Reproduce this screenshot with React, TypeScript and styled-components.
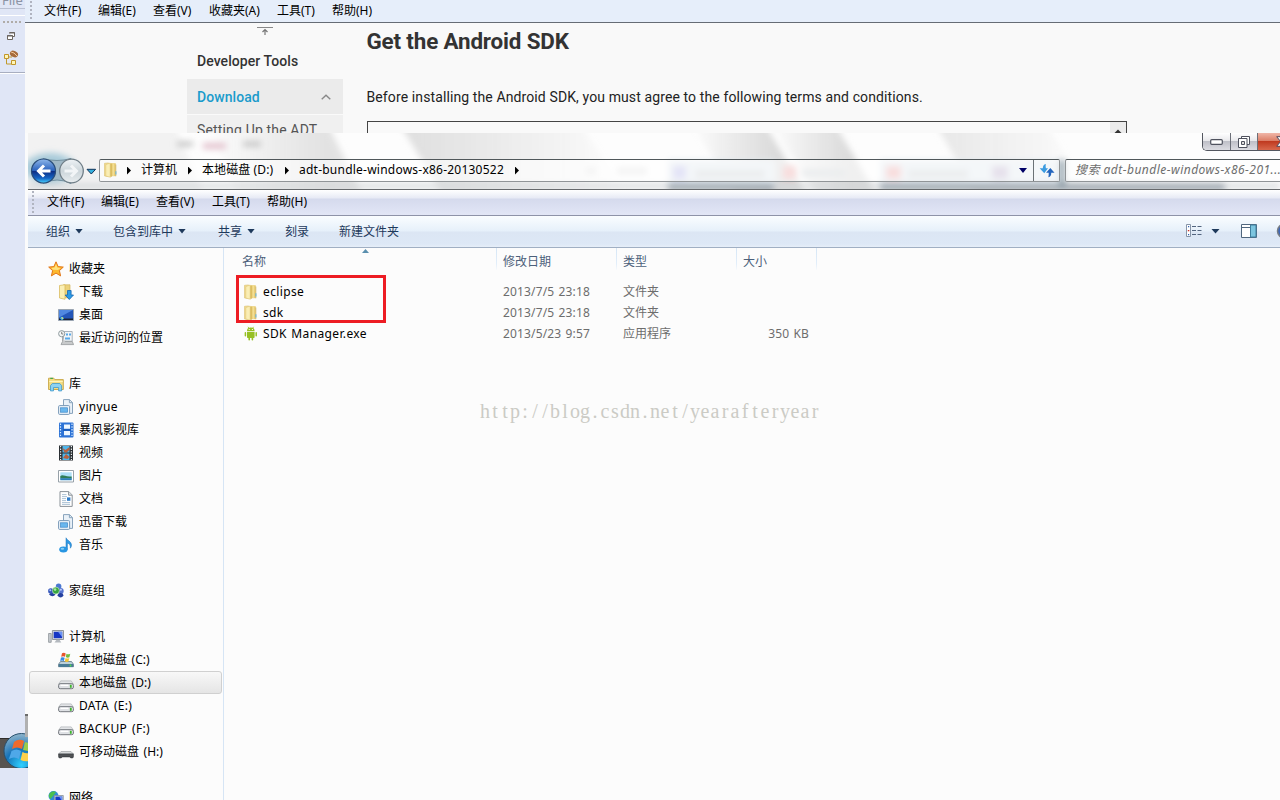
import React from 'react';
import styled, { createGlobalStyle, css } from 'styled-components';

const UI_FONT = `'Noto Sans', 'Noto Sans CJK SC', sans-serif`;

const GlobalStyle = createGlobalStyle`
  * {
    box-sizing: border-box;
  }

  body {
    margin: 0;
    overflow: hidden;
    font-family: ${UI_FONT};
    font-size: 12px;
    color: #000;
  }

  svg {
    display: block;
    flex: none;
  }
`;

/* ---------- desktop ---------- */

const StScreen = styled.div`
  position: relative;
  display: flex;
  width: 1280px;
  height: 800px;
  overflow: hidden;
  background: #e0e6f6;
`;

const StEclipseStrip = styled.div`
  display: flex;
  flex-direction: column;
  width: 25px;
  flex: none;
`;

const StStripTitle = styled.div`
  height: 16px;
  padding-left: 2px;
  line-height: 14px;
  margin-top: -7px;
  font-size: 13px;
  color: #8b93a4;
  border-bottom: 1px solid #b9c0d2;
`;

const StStripTools = styled.div`
  display: flex;
  flex-direction: column;
  height: 64px;
  border-bottom: 1px solid #a8aec0;
  box-shadow: 0 1px 0 #fff;
`;

const StMain = styled.div`
  display: flex;
  flex-direction: column;
  width: 1255px;
  flex: none;
`;

const StBrowserMenu = styled.div`
  display: flex;
  align-items: center;
  height: 23px;
  padding-left: 5px;
  background: #e6eefa;
  border-bottom: 1px solid #666c75;
`;

const StGrip = styled.div<{ $gap: number; $height: number }>`
  width: 2px;
  height: ${({ $height }) => $height}px;
  margin-right: ${({ $gap }) => $gap}px;
  background: repeating-linear-gradient(#b0b4c0 0 2px, transparent 2px 4px);
`;

const StMenuItem = styled.span<{ $width: number }>`
  width: ${({ $width }) => $width}px;
  flex: none;
  line-height: 18px;
  white-space: nowrap;
`;

/* ---------- web page ---------- */

const StPage = styled.div`
  display: flex;
  height: 110px;
  overflow: hidden;
  padding-left: 162px;
  background: #f9f9f9;
  font-family: Roboto, sans-serif;
  font-size: 14px;
  color: #222;
`;

const StPageNav = styled.div`
  width: 156px;
`;

const StNavTop = styled.div`
  display: flex;
  justify-content: center;
  height: 28px;
  padding-top: 4px;
`;

const StNavHeading = styled.div`
  height: 28px;
  padding-left: 10px;
  line-height: 20px;
  font-weight: 500;
  letter-spacing: 0.07px;
  color: #333;
`;

const StNavCurrent = styled.div`
  display: flex;
  align-items: center;
  justify-content: space-between;
  height: 36px;
  padding: 0 12px 0 10px;
  font-weight: 500;
  letter-spacing: 0.07px;
  color: #1a9bcb;
  background: #ebebeb;
  border-bottom: 1px solid #fafafa;
`;

const StNavChild = styled.div`
  height: 40px;
  padding: 5px 10px;
  line-height: 20px;
  letter-spacing: 0.16px;
  color: #555;
  background: #f0f0f0;
`;

const StPageBody = styled.div`
  width: 780px;
  margin-left: 23px;
`;

const StPageTitle = styled.h1`
  height: 36px;
  margin: 0 0 0 0.5px;
  line-height: 36px;
  font-size: 22.4px;
  font-weight: 700;
  letter-spacing: -0.16px;
  color: #333;
`;

const StPageText = styled.p`
  height: 62px;
  margin: 0 0 0 0.5px;
  padding-top: 28px;
  line-height: 20px;
  letter-spacing: 0.11px;
`;

const StTermsBox = styled.div`
  display: flex;
  justify-content: flex-end;
  width: 760px;
  height: 60px;
  border: 1px solid #444;
  margin-left: 1px;
`;

const StTermsScroll = styled.div`
  display: flex;
  justify-content: center;
  width: 16px;
  padding-top: 7px;
  background: #ececec;
`;

/* ---------- explorer window ---------- */

const StWindowRow = styled.div`
  display: flex;
  height: 667px;
`;

const StGutter = styled.div`
  width: 3px;
  flex: none;
  height: 635px;
  background: linear-gradient(
    #fbfbfb 0 581px,
    #6b6b6b 581px 583px,
    #b0b0b0 583px 605px,
    #444 605px
  );
`;

const StWindow = styled.div`
  display: flex;
  flex-direction: column;
  width: 1252px;
  flex: none;
  background: #fcfcfc;
`;

const StGlass = styled.div`
  position: relative;
  display: flex;
  flex-direction: column;
  height: 57px;
  overflow: hidden;
  border-bottom: 1px solid #66696c;
`;

const StGlassArt = styled.svg`
  position: absolute;
  inset: 0;
`;

const StCaption = styled.div`
  position: relative;
  display: flex;
  justify-content: flex-end;
  height: 26px;
`;

const StCaptionButtons = styled.div`
  display: flex;
  width: 78px;
  height: 18px;
  overflow: hidden;
  border: 1px solid #53565f;
  border-top: 0;
  border-right: 0;
  border-bottom-left-radius: 5px;
`;

const StCaptionButton = styled.div<{ $width: number; $close?: boolean }>`
  display: flex;
  flex: none;
  align-items: center;
  justify-content: center;
  width: ${({ $width }) => $width}px;
  background: linear-gradient(#fff, #e9e9ec 45%, #bfc0c8 50%, #dcdce2);
  border-right: 1px solid #6c6f78;

  ${({ $close }) =>
    $close &&
    css`
      justify-content: flex-start;
      padding-left: 18px;
      background: linear-gradient(#f0b6a8, #dc7f68 45%, #c03a20 50%, #d8684c);
      border-right: 0;
    `}
`;

const StAddressRow = styled.div`
  position: relative;
  display: flex;
  height: 24px;
`;

const StNavButtons = styled.div`
  width: 71px;
  flex: none;
  margin-top: -5px;
`;

const StAddressBar = styled.div`
  display: flex;
  align-items: center;
  width: 961px;
  height: 23px;
  flex: none;
  background: rgba(255, 255, 255, 0.6);
  border: 1px solid #909497;
  border-top-color: #50575a;
  border-radius: 2px;
`;

const StCrumb = styled.span<{ $width: number; $spacing?: number }>`
  width: ${({ $width }) => $width}px;
  flex: none;
  line-height: 18px;
  margin-top: -2px;
  white-space: nowrap;
  letter-spacing: ${({ $spacing = 0 }) => $spacing}px;
`;

const StCrumbIcon = styled.div`
  width: 27px;
  flex: none;
  padding-left: 3px;
  margin-top: -1px;
`;

const StCrumbArrow = styled.i<{ $gap: number }>`
  width: 4px;
  height: 8px;
  flex: none;
  margin-right: ${({ $gap }) => $gap}px;
  background: #000;
  clip-path: polygon(0 0, 100% 50%, 0 100%);
`;

const StCaret = styled.i<{ $color?: string }>`
  display: inline-block;
  flex: none;
  width: 8px;
  height: 5px;
  background: ${({ $color = '#1e395b' }) => $color};
  clip-path: polygon(0 0, 100% 0, 50% 100%);
`;

const StAddressTail = styled.div`
  display: flex;
  align-items: center;
  height: 100%;
  margin-left: auto;
`;

const StRefresh = styled.div`
  display: flex;
  align-items: center;
  justify-content: center;
  width: 26px;
  height: 100%;
  margin-left: 6px;
  border-left: 1px solid #6b7276;
`;

const StSearch = styled.div`
  width: 230px;
  height: 23px;
  flex: none;
  margin-left: 5px;
  padding-left: 9px;
  line-height: 20px;
  font-style: italic;
  letter-spacing: 0.48px;
  color: #6d6d6d;
  white-space: nowrap;
  background: rgba(255, 255, 255, 0.6);
  border: 1px solid #909497;
  border-top-color: #50575a;
  border-radius: 2px;
`;

const StMenuBar = styled.div`
  display: flex;
  align-items: center;
  height: 26px;
  padding: 0 0 1px 4px;
  background: linear-gradient(#fff, #e7eaf5 8px, #d5daed 9px, #e2e6f6);
  border-bottom: 1px solid #8e93a8;
`;

const StToolbar = styled.div`
  display: flex;
  align-items: center;
  height: 32px;
  padding: 0 0 1px 18px;
  color: #1e395b;
  background: linear-gradient(#fafdff, #e6f0fa 15px, #dce6f4 16px, #dde8f6 28px, #e6eef8);
  border-bottom: 1px solid #a0afc3;
`;

const StTool = styled.div<{ $width: number }>`
  display: flex;
  align-items: center;
  gap: 5px;
  width: ${({ $width }) => $width}px;
  flex: none;
  white-space: nowrap;
`;

const StToolIcons = styled.div`
  display: flex;
  align-items: center;
  margin-left: auto;
  width: 94px;
`;

const StContent = styled.div`
  display: flex;
  flex: 1;
  min-height: 0;
`;

const StTree = styled.div`
  width: 196px;
  flex: none;
  overflow: hidden;
  padding: 9px 1px 0;
  border-right: 1px solid #d6e5f5;
`;

const StTreeRow = styled.div<{ $level: number; $selected?: boolean }>`
  display: flex;
  align-items: center;
  gap: 5px;
  height: 23px;
  padding-left: ${({ $level }) => 18 + $level * 10}px;
  border: 1px solid transparent;
  border-radius: 3px;
  white-space: nowrap;

  ${({ $selected }) =>
    $selected &&
    css`
      background: linear-gradient(#f8f8f8, #e5e5e5);
      border-color: #d0d0d0;
    `}
`;

const StTreeLabel = styled.span<{ $latin: boolean }>`
  padding-bottom: ${({ $latin }) => ($latin ? 0 : 2)}px;
  word-spacing: 1.5px;
  letter-spacing: ${({ $latin }) => ($latin ? 0.3 : 0)}px;
`;

const StFiles = styled.div`
  position: relative;
  flex: 1;
`;

const StHeaderRow = styled.div`
  position: relative;
  display: flex;
  height: 33px;
`;

const StHeaderCell = styled.div<{ $width: number; $indent: number }>`
  width: ${({ $width }) => $width}px;
  height: 22px;
  flex: none;
  padding-left: ${({ $indent }) => $indent}px;
  line-height: 27px;
  color: #4c607a;
  border-right: 1px solid;
  border-image: linear-gradient(#d5e6f5, #e2eefa 70%, #fcfcfc) 1;
`;

const StSortMark = styled.i`
  position: absolute;
  top: 1px;
  left: 138px;
  width: 7px;
  height: 4px;
  background: #5a8fae;
  clip-path: polygon(50% 0, 100% 100%, 0 100%);
`;

const StFileRow = styled.div`
  display: flex;
  align-items: center;
  height: 21px;
  padding-left: 19px;
  color: #6d6d6d;
  white-space: nowrap;
`;

const StFileName = styled.div`
  display: flex;
  align-items: center;
  gap: 4px;
  width: 260px;
  letter-spacing: 0.36px;
  word-spacing: 1px;
  color: #000;
`;

const StFileDate = styled.div`
  width: 120px;
  letter-spacing: 0.15px;
  word-spacing: 1px;
`;

const StFileType = styled.div`
  width: 106px;
  padding-bottom: 1px;
`;

const StFileSize = styled.div`
  width: 80px;
  letter-spacing: 0.15px;
  word-spacing: 1px;
  text-align: right;
`;

const StHighlight = styled.div`
  position: absolute;
  top: 27px;
  left: 12px;
  width: 150px;
  height: 48px;
  border: 3px solid #ed1c24;
`;

const StWatermark = styled.div`
  position: absolute;
  top: 151px;
  left: 256px;
  display: flex;
  font-family: 'Liberation Serif', serif;
  font-size: 20px;
  line-height: 24px;
  color: #cbcbc5;
`;

const StWatermarkChar = styled.span`
  width: 10px;
  text-align: center;
`;

const StStartOrb = styled.div`
  position: absolute;
  top: 730px;
  left: 0;
  width: 28px;
  height: 38px;
  overflow: hidden;
`;

/* ---------- icons ---------- */

const Icon: React.FC<{ children: React.ReactNode }> = ({ children }) => (
  <svg width="16" height="16" viewBox="0 0 16 16">
    {children}
  </svg>
);

const IconFolder = () => (
  <Icon>
    <path d="M5.5 1.2h7.300v13H5.500Z" fill="#e9ce78" />
    <path d="M12.800 2.500v11.700" stroke="#cdb060" strokeWidth=".8" />
    <path d="M1.500 1.300 5.500.9v13.700l-4-.6Z" fill="#f1dc8d" stroke="#dcc173" strokeWidth=".6" />
    <path d="M2.800 2.600 7.200 1v14.200l-4.400-1.200Z" fill="#faeeb5" stroke="#e0c678" strokeWidth=".6" />
    <path d="m7.500 2 1.300-.4v13l-1.300.8Z" fill="#d8b95d" />
    <path d="M10.300 1.500v12.500" stroke="#f3de93" strokeWidth="1.400" />
    <path d="M12.900 9.300v3.200" stroke="#68b4da" strokeWidth="1.100" />
  </Icon>
);

const IconStar = () => (
  <Icon>
    <path
      d="m8 .8 2.1 4.8 5.2.5-3.9 3.5 1.2 5.3L8 12.1l-4.6 2.8 1.2-5.3L.7 6.1l5.2-.5Z"
      fill="#fdb92e"
      stroke="#e27618"
    />
    <path d="m8 3 1.3 3.6 3.2.4-2.5 2-5-.2L3.4 7l3.2-.4Z" fill="#ffe27e" />
  </Icon>
);

const IconDownload = () => (
  <Icon>
    <path d="M5.500.8H12v13H5.500Z" fill="#ecd27a" stroke="#d3b45c" strokeWidth=".7" />
    <path d="m1.500 1.500 5.500-.8v14.600l-5.500-1.300Z" fill="#fbefb4" stroke="#d6b451" strokeWidth=".7" />
    <path d="M9.500 6.500h3.600V11h2.400l-4.200 4.500L7.200 11h2.300Z" fill="#2b9be8" stroke="#1666b0" strokeWidth=".8" />
  </Icon>
);

const IconDesktop = () => (
  <Icon>
    <path d="M.5 2.500h15v11H.5Z" fill="#2456b8" stroke="#9aa4b0" />
    <path d="M1 3h14L1 10.500Z" fill="#5088e0" />
    <path d="M1 11.500h14V13H1Z" fill="#1c2434" />
    <circle cx="4" cy="11.300" r="1.600" fill="#3bb4f0" />
    <path d="M4 10.200v1.100h1.200" stroke="#ffe650" fill="none" />
  </Icon>
);

const IconRecent = () => (
  <Icon>
    <path d="M5.500 1.500h8.700v9.800H5.500Z" fill="#f2f5f8" stroke="#aab2ba" />
    <path d="M8 3.500h2v2H8Zm3 0h2v2h-2ZM7 7.500h5v2H7Z" fill="#58a9e8" />
    <circle cx="3.700" cy="3.700" r="3.100" fill="#f5f7f6" stroke="#8f9a9e" />
    <path d="M3.700 1.800v2.200h1.600" stroke="#555" strokeWidth=".7" fill="none" />
    <path d="M4.500 7v4.500L3 14.600h12.600l-1.400-3.200H7" fill="#c8cacb" stroke="#96999b" strokeWidth=".8" />
  </Icon>
);

const IconLibrary = () => (
  <Icon>
    <path d="M.6 13.500V2.200h5.200l1 1.400h8.500v9.900Z" fill="#f3dd85" stroke="#cba94a" />
    <path d="M2.300 2.400h2.600" stroke="#3da84e" strokeWidth="1.200" />
    <path d="M1.200 5.500h13.600" stroke="#fff3b8" />
    <path d="M2.500 14.900V9.600L4.300 7.500h7.500l1.800 2.100v5.300h-3V11.500H5.500v3.400Z" fill="#8bd2f3" stroke="#3f98c9" strokeWidth=".8" />
  </Icon>
);

const IconLibraryGeneric = () => (
  <Icon>
    <path d="M5.500.6h6l3 3v10.800h-9Z" fill="#e9f1f8" stroke="#88a3bc" />
    <path d="M11.400.6v3.100h3.100" fill="none" stroke="#88a3bc" />
    <rect x=".6" y="6.600" width="11" height="8.800" rx="1" fill="#eef5fb" stroke="#7898b7" />
    <rect x="2.600" y="8.800" width="7" height="4.400" fill="#69b7ee" stroke="#3f87c6" strokeWidth=".7" />
  </Icon>
);

const IconStormLibrary = () => (
  <Icon>
    <rect x="1" y=".5" width="14.500" height="15" rx="1" fill="#2d73d6" />
    <path d="M2.500 1.500v13.500M14 1.500v13.500" stroke="#d7ebff" strokeWidth="1.200" strokeDasharray="1.400 1.400" />
    <path d="M6 2.500h6v4.200H6Zm0 6.500h6v4.200H6Z" fill="#eef7ff" />
    <path d="M5 8h8" stroke="#0f4ca6" />
  </Icon>
);

const IconVideo = () => (
  <Icon>
    <rect x="1" y=".5" width="14" height="15" fill="#2a2f33" />
    <path d="M2.600 1v14M13.400 1v14" stroke="#e9eef0" strokeWidth="1.200" strokeDasharray="1.300 1.300" />
    <path d="M4.500 1h7v6.500h-7Zm0 7.500h7V15h-7Z" fill="#4eb5ea" />
    <path d="m4.500 3 3 2 4-3v3l-3 2.500H6.500ZM5 13l3-4 3.500 3-2 2Z" fill="#b9603e" />
  </Icon>
);

const IconPicture = () => (
  <Icon>
    <path d="M.5 2.500h15V14H.5Z" fill="#fff" stroke="#97a1a9" />
    <path d="M2.300 4.300h11.400v7.900H2.300Z" fill="#aee0f7" />
    <path d="M2.300 8c3-2 4.500 1.200 11.400.4v2H2.300Z" fill="#2e7d57" />
    <path d="M2.300 10.200h11.400v2H2.300Z" fill="#2d7fb8" />
  </Icon>
);

const IconDocument = () => (
  <Icon>
    <path d="M2 .6h8.800l3.400 3.400v11.400H2Z" fill="#fff" stroke="#8b9299" />
    <path d="M10.600.8v3.400H14" fill="#e7ecf0" stroke="#8b9299" />
    <path d="M4 3.600h4.500M4 5.600h5M4 7.600h4M4 9.600h4M4 11.600h8M4 13.400h8" stroke="#97b3c9" strokeWidth=".8" />
    <path d="M9 6.400h3.400v3.400H9Z" fill="#2d7cc9" />
  </Icon>
);

const IconMusic = () => (
  <Icon>
    <path d="M8 .8c1 3 5.500 3.400 5.500 7.200 0 1.500-.6 2.500-1.200 3.200.3-3-.6-4.400-2.900-5.200v6.400H8Z" fill="#2f9be6" stroke="#1a70bb" strokeWidth=".5" />
    <ellipse cx="5.400" cy="12.600" rx="4.200" ry="3" fill="#2896e2" />
    <ellipse cx="4.400" cy="11.800" rx="1.800" ry="1" fill="#8ad0f7" />
  </Icon>
);

const IconHomegroup = () => (
  <Icon>
    <circle cx="10.600" cy="3.400" r="2.800" fill="#4b78d0" />
    <circle cx="2.800" cy="8" r="2.700" fill="#3657bb" />
    <circle cx="12.800" cy="8" r="2.900" fill="#5573cf" />
    <path d="M9.300 12.500a3.200 3 0 0 1 6.300 0q-2.800 4-6.300 0M1 11.400a4 3 0 0 1 6.600 0q-3 3.600-6.600 0" fill="#26419f" />
    <circle cx="7.900" cy="7.600" r="3.500" fill="#36a53f" stroke="#d8f0d8" strokeWidth=".6" />
    <circle cx="7.100" cy="6.600" r="1.300" fill="#a9e59f" />
    <circle cx="2.300" cy="7.200" r="1" fill="#a8c1f3" />
    <circle cx="12.900" cy="6.800" r="1" fill="#c3d3fa" />
  </Icon>
);

const IconComputer = () => (
  <Icon>
    <path d="M.6 4.500h2.600v8.800H.6Z" fill="#c8ccd1" stroke="#7f858b" strokeWidth=".7" />
    <path d="M4.400 1.500h11.100v9H4.400Z" fill="#d7dade" stroke="#8f959b" />
    <path d="M5.700 2.800h8.500v6.400H5.700Z" fill="#1636c4" />
    <path d="M10 2.800h4.200v5.400Z" fill="#6b93f4" />
    <path d="M8.500 10.800h3l1.800 2.700H6.500Z" fill="#b4b9bf" />
  </Icon>
);

const IconSystemDrive = () => (
  <Icon>
    <path d="m2.500 9.500-2 2.800v2.400h15v-2.400l-2-2.800Z" fill="#bcd0da" stroke="#617986" strokeWidth=".8" />
    <path d="M.8 12h14.400v3H.8Z" fill="#4a7c96" />
    <path d="M12.500 12.600v1.800" stroke="#52e04b" strokeWidth="1.600" />
    <path d="M4 1.300q2-1 3.700.1L7 4.800q-1.800-1-3.800 0Z" fill="#e8552b" />
    <path d="M8.500 1.800q1.800 1 3.800 0l-.9 3.500q-1.800.9-3.600-.2Z" fill="#72bd3f" />
    <path d="M3 5.600q2-.9 3.700.1L5.900 9q-1.700-1-3.700-.1Z" fill="#3a8be0" />
    <path d="M7.600 6.100q1.800 1 3.700 0l-.9 3.400q-1.800.9-3.600-.2Z" fill="#f5c434" />
  </Icon>
);

const IconDrive = () => (
  <Icon>
    <path d="M2.800 5.900h10.400l2.100 3.100H.7Z" fill="#e2e4e7" stroke="#b0b4b8" strokeWidth=".7" />
    <rect x=".6" y="8.700" width="14.800" height="5" rx="1.600" fill="#dfe1e5" stroke="#74787e" />
    <path d="M2.500 10.300h8" stroke="#fff" strokeWidth="1.400" />
    <path d="M12.800 9.800v3" stroke="#3eb82c" strokeWidth="1.800" />
  </Icon>
);

const IconRemovable = () => (
  <Icon>
    <path d="M3 7.500h10l2.400 2.500H.6Z" fill="#d8dadb" stroke="#9fa3a6" strokeWidth=".7" />
    <path d="M.6 9.900h14.800v2.800q0 1.200-1.200 1.200h-1.500l-1-1H4.300l-1 1H1.800q-1.200 0-1.200-1.200Z" fill="#4e5154" stroke="#33363a" strokeWidth=".6" />
  </Icon>
);

const IconNetwork = () => (
  <Icon>
    <circle cx="5.500" cy="6" r="5" fill="#2e8bd8" />
    <path d="M2 3q3-3 6-.8L5 6 2.500 9Q-.5 6 2 3" fill="#4cc04e" />
    <path d="M6.300 5.500h9v7.800h-9Z" fill="#cfd5dd" stroke="#7e868f" strokeWidth=".7" />
    <path d="M7.400 6.600h6.800v5.500H7.400Z" fill="#1739c9" />
    <path d="M11 6.600h3.200V11Z" fill="#6b93f4" />
  </Icon>
);

const IconAndroid = () => (
  <Icon>
    <path d="M4 5a3.800 3.400 0 0 1 7.600 0ZM4 5.800h7.600v5.400q0 .8-.8.800h-.6v1.700q0 .8-.8.800t-.8-.8V12H7v1.700q0 .8-.8.800t-.8-.8V12h-.6q-.8 0-.8-.8Z" fill="#97c024" />
    <path d="M2.400 6.700v3.100M13.200 6.700v3.100" stroke="#97c024" strokeWidth="1.500" strokeLinecap="round" />
    <path d="m5 .8.900 1.400M10.600.8l-.9 1.400" stroke="#97c024" strokeWidth=".8" />
    <path d="M5.700 3.100h1v1h-1Zm3.200 0h1v1h-1Z" fill="#fff" />
  </Icon>
);

const IconNavButtons = () => (
  <svg width="71" height="34" viewBox="0 0 71 34">
    <defs>
      <linearGradient id="back" x1="0" y1="0" x2="0" y2="1">
        <stop offset="0" stopColor="#8fb8ea" />
        <stop offset=".48" stopColor="#2a62bd" />
        <stop offset=".52" stopColor="#0d2f86" />
        <stop offset=".8" stopColor="#1565c4" />
        <stop offset="1" stopColor="#48d4ff" />
      </linearGradient>
      <linearGradient id="forward" x1="0" y1="0" x2="0" y2="1">
        <stop offset="0" stopColor="#eef3f6" />
        <stop offset=".5" stopColor="#ccd5da" />
        <stop offset="1" stopColor="#e9eef0" />
      </linearGradient>
    </defs>
    <path d="M15 4.500q14 4 28 0v25q-14-7-28 0Z" fill="#9fb8c6" stroke="#73909f" />
    <circle cx="15.500" cy="17" r="12" fill="url(#back)" stroke="#294d79" strokeWidth="1.200" />
    <path d="M22.500 17H10.500m5.500-5.500L10.500 17l5.500 5.500" fill="none" stroke="#fff" strokeWidth="3" />
    <circle cx="43.500" cy="17" r="11.800" fill="url(#forward)" stroke="#717f88" strokeWidth="1.300" />
    <path d="M36.500 17h12M43 11.500l5.500 5.500-5.500 5.500" fill="none" stroke="#f2f5f7" strokeWidth="3" />
    <path d="M59 15.300h8.600L63.300 20Z" fill="#36b0dd" stroke="#123459" />
  </svg>
);

const GlassArt = () => (
  <StGlassArt width="1252" height="57" viewBox="28 133 1252 57">
    <defs>
      <linearGradient id="streak">
        <stop offset="0" stopColor="#d6d6d6" stopOpacity="0" />
        <stop offset=".75" stopColor="#d9d9d9" />
        <stop offset="1" stopColor="#dcdcdc" />
      </linearGradient>
      <linearGradient id="fade">
        <stop offset="0" stopColor="#dedede" />
        <stop offset="1" stopColor="#dedede" stopOpacity="0" />
      </linearGradient>
      <filter id="soft" x="-20%" y="-50%" width="140%" height="200%">
        <feGaussianBlur stdDeviation="3" />
      </filter>
      <filter id="edge" x="-10%" y="-20%" width="120%" height="140%">
        <feGaussianBlur stdDeviation="3" />
      </filter>
    </defs>
    <path d="M28 133h1252v57H28Z" fill="#fdfdfd" />
    <g filter="url(#edge)">
      <path d="M20 121h153l34 81H20Z" fill="#f2f2f2" />
      <path d="M205 121h121l40 81H240Z" fill="url(#streak)" opacity=".75" />
      <path d="M398 121h180l54 81H447Z" fill="url(#fade)" />
      <path d="M690 121h73l48 81h-70Z" fill="url(#streak)" />
      <path d="M770 121h63l48 81h-60Z" fill="url(#streak)" />
      <path d="M934 121h110l50 81H980Z" fill="url(#fade)" opacity=".7" />
    </g>
    <g filter="url(#soft)">
      <ellipse cx="50" cy="168" rx="26" ry="15" fill="#a7cad9" />
      <path d="M177 144h16M243 144h18" stroke="#c4c4c4" strokeWidth="5" />
      <path d="M203 146h23" stroke="#e3c2ce" strokeWidth="6" />
      <path d="M586 171h10M617 171h30" stroke="#e2e2e2" strokeWidth="7" />
      <path d="M668 160h107v30H668ZM880 160h185v30H880Z" fill="#e3eaf0" />
      <path d="M28 186h1252" stroke="#cfd3d6" strokeWidth="4" />
      <path d="M668 187h106M880 187h345" stroke="#9aa3ab" strokeWidth="7" />
      <path d="M673 166h13v13h-13Z" fill="#b9b9ea" />
      <path d="M783 166h13v13h-13ZM886 166h15v13h-15Z" fill="#eeabab" />
      <path d="M992 166h16v13h-16Z" fill="#c1b4cf" />
      <path d="M695 174h70M802 173h44M908 174h60" stroke="#ced3d6" strokeWidth="8" />
      <path d="M1062 160v28" stroke="#8798a2" strokeWidth="5" />
    </g>
  </StGlassArt>
);

/* ---------- data ---------- */

type TreeItem = {
  label: string;
  level: number;
  icon: React.FC;
  selected?: boolean;
};

const TREE: (TreeItem | null)[] = [
  { label: '收藏夹', level: 0, icon: IconStar },
  { label: '下载', level: 1, icon: IconDownload },
  { label: '桌面', level: 1, icon: IconDesktop },
  { label: '最近访问的位置', level: 1, icon: IconRecent },
  null,
  { label: '库', level: 0, icon: IconLibrary },
  { label: 'yinyue', level: 1, icon: IconLibraryGeneric },
  { label: '暴风影视库', level: 1, icon: IconStormLibrary },
  { label: '视频', level: 1, icon: IconVideo },
  { label: '图片', level: 1, icon: IconPicture },
  { label: '文档', level: 1, icon: IconDocument },
  { label: '迅雷下载', level: 1, icon: IconLibraryGeneric },
  { label: '音乐', level: 1, icon: IconMusic },
  null,
  { label: '家庭组', level: 0, icon: IconHomegroup },
  null,
  { label: '计算机', level: 0, icon: IconComputer },
  { label: '本地磁盘 (C:)', level: 1, icon: IconSystemDrive },
  { label: '本地磁盘 (D:)', level: 1, icon: IconDrive, selected: true },
  { label: 'DATA (E:)', level: 1, icon: IconDrive },
  { label: 'BACKUP (F:)', level: 1, icon: IconDrive },
  { label: '可移动磁盘 (H:)', level: 1, icon: IconRemovable },
  null,
  { label: '网络', level: 0, icon: IconNetwork },
];

const FILES = [
  { name: 'eclipse', date: '2013/7/5 23:18', type: '文件夹', size: '', icon: IconFolder },
  { name: 'sdk', date: '2013/7/5 23:18', type: '文件夹', size: '', icon: IconFolder },
  { name: 'SDK Manager.exe', date: '2013/5/23 9:57', type: '应用程序', size: '350 KB', icon: IconAndroid },
];

/* ---------- sections ---------- */

const EclipseStrip = () => (
  <StEclipseStrip>
    <StStripTitle>File</StStripTitle>
    <StStripTools>
      <svg width="25" height="63" viewBox="0 9 25 63">
        <path d="M0 15.500h25" stroke="#fff" />
        <path d="M3 22h18" stroke="#b0aca8" strokeWidth="2" strokeDasharray="2 2" />
        <path d="M9.500 32.500h5v4h-2M7.500 35.500h5v4h-5Z" fill="#fff" stroke="#6b6560" />
        <path d="M9 33h6M7 36h6" stroke="#6b6560" />
        <path d="M6.500 58v6h5M9 57h3" fill="none" stroke="#c19a2b" />
        <path d="M4.500 54.500h4v4h-4Zm7 6h4v4h-4Z" fill="#fff6b8" stroke="#c1962a" />
        <ellipse cx="14" cy="54" rx="4.200" ry="3.100" transform="rotate(25 14 54)" fill="#a66b3c" />
        <path d="M11 52q3 0 6 4" stroke="#f0c79a" fill="none" />
      </svg>
    </StStripTools>
  </StEclipseStrip>
);

const BrowserPage = () => (
  <StPage>
    <StPageNav>
      <StNavTop>
        <svg width="16" height="10" viewBox="0 0 16 10">
          <path d="M0 .5h16" stroke="#888" />
          <path d="M8 8V3M5.500 5 8 2.500 10.500 5" stroke="#777" strokeWidth="1.200" fill="none" />
        </svg>
      </StNavTop>
      <StNavHeading>Developer Tools</StNavHeading>
      <StNavCurrent>
        Download
        <svg width="10" height="6" viewBox="0 0 10 6">
          <path d="m.7 5.300 4.300-4 4.300 4" fill="none" stroke="#888" strokeWidth="1.400" />
        </svg>
      </StNavCurrent>
      <StNavChild>Setting Up the ADT</StNavChild>
    </StPageNav>
    <StPageBody>
      <StPageTitle>Get the Android SDK</StPageTitle>
      <StPageText>
        Before installing the Android SDK, you must agree to the following terms and conditions.
      </StPageText>
      <StTermsBox>
        <StTermsScroll>
          <svg width="8" height="5" viewBox="0 0 8 5">
            <path d="M0 4.500 4 .5l4 4Z" fill="#333" />
          </svg>
        </StTermsScroll>
      </StTermsBox>
    </StPageBody>
  </StPage>
);

const Glass = () => (
  <StGlass>
    <GlassArt />
    <StCaption>
      <StCaptionButtons>
        <StCaptionButton $width={28}>
          <svg width="13" height="6" viewBox="0 0 13 6">
            <rect x=".7" y=".7" width="11.600" height="4.600" rx="1" fill="#fff" stroke="#4f525e" strokeWidth="1.200" />
          </svg>
        </StCaptionButton>
        <StCaptionButton $width={27}>
          <svg width="12" height="12" viewBox="0 0 12 12">
            <path d="M3.500.5h8v8h-8Z" fill="#fff" stroke="#4f525e" />
            <path d="M.5 2.500h8.500v9H.5Z" fill="#fff" stroke="#4f525e" />
            <path d="M3.500 5.500h3v3h-3Z" fill="#ddd" stroke="#4f525e" />
          </svg>
        </StCaptionButton>
        <StCaptionButton $width={40} $close>
          <svg width="13" height="11" viewBox="0 0 13 11">
            <path d="M.7.7h3.400l2.400 2.700L8.900.7h3.400L8.400 5.500l3.900 4.800H8.900L6.500 7.600l-2.400 2.700H.7l3.900-4.800Z" fill="#fff" stroke="#53475a" />
          </svg>
        </StCaptionButton>
      </StCaptionButtons>
    </StCaption>
    <StAddressRow>
      <StNavButtons>
        <IconNavButtons />
      </StNavButtons>
      <StAddressBar>
        <StCrumbIcon>
          <IconFolder />
        </StCrumbIcon>
        <StCrumbArrow $gap={10} />
        <StCrumb $width={47}>计算机</StCrumb>
        <StCrumbArrow $gap={10} />
        <StCrumb $width={83} $spacing={0.1}>
          本地磁盘 (D:)
        </StCrumb>
        <StCrumbArrow $gap={10} />
        <StCrumb $width={216} $spacing={0.23}>
          adt-bundle-windows-x86-20130522
        </StCrumb>
        <StCrumbArrow $gap={0} />
        <StAddressTail>
          <StCaret $color="#000066" />
          <StRefresh>
            <svg width="16" height="15" viewBox="0 0 14 13">
              <path d="M6 .8Q3.200 1.400 3.400 4.600H.6l4 4.300 3.300-4.300H6Q5.600 2.500 6 .8Z" fill="#3b9be0" />
              <path d="M8.200 12.500q2.700-.8 2.500-4h2.900L9.900 4.300 6.200 8.500h2.300q.1 2-.3 4Z" fill="#2465bd" />
            </svg>
          </StRefresh>
        </StAddressTail>
      </StAddressBar>
      <StSearch>搜索 adt-bundle-windows-x86-201...</StSearch>
    </StAddressRow>
  </StGlass>
);

const Toolbar = () => (
  <StToolbar>
    <StTool $width={67}>
      组织 <StCaret />
    </StTool>
    <StTool $width={105}>
      包含到库中 <StCaret />
    </StTool>
    <StTool $width={67}>
      共享 <StCaret />
    </StTool>
    <StTool $width={54}>刻录</StTool>
    <StTool $width={80}>新建文件夹</StTool>
    <StToolIcons>
      <svg width="94" height="16" viewBox="1186 223 94 16">
        <path d="M1186.500 224.500h4v12h-4Z" fill="#fff" stroke="#8795a8" />
        <path d="M1188 226h1.200v1.200H1188Zm0 8h1.200v1.200H1188Z" fill="#2d62b4" />
        <path d="M1187.800 230h1.500v1.300h-1.500Z" fill="#c8322b" />
        <path d="M1192 226.500h9.500M1192 230.500h9.500M1192 234.500h9.500" stroke="#52647e" strokeDasharray="4 1.500" />
        <path d="M1211.500 229h8l-4 4.500Z" fill="#1e395b" />
        <path d="M1241.500 224.500h15v13h-15Z" fill="#fff" stroke="#50677e" />
        <path d="M1242 227.500h9" stroke="#50677e" />
        <path d="M1250.500 225h5.500v12h-5.500Z" fill="#7cc5df" stroke="#3e7f9e" />
        <circle cx="1284.500" cy="231" r="7" fill="#3b66b8" stroke="#777d85" strokeWidth="1.500" />
      </svg>
    </StToolIcons>
  </StToolbar>
);

const Tree = () => (
  <StTree>
    {TREE.map((item, index) => {
      if (!item) {
        return <StTreeRow key={index} $level={0} />;
      }
      const ItemIcon = item.icon;
      return (
        <StTreeRow key={index} $level={item.level} $selected={item.selected}>
          <ItemIcon />
          <StTreeLabel $latin={/^[A-Z]/.test(item.label) || item.label === 'yinyue'}>
            {item.label}
          </StTreeLabel>
        </StTreeRow>
      );
    })}
  </StTree>
);

const FileList = () => (
  <StFiles>
    <StHeaderRow>
      <StHeaderCell $width={273} $indent={18}>
        名称
      </StHeaderCell>
      <StHeaderCell $width={120} $indent={6}>
        修改日期
      </StHeaderCell>
      <StHeaderCell $width={120} $indent={6}>
        类型
      </StHeaderCell>
      <StHeaderCell $width={80} $indent={6}>
        大小
      </StHeaderCell>
      <StSortMark />
    </StHeaderRow>
    {FILES.map(({ icon: FileIcon, ...file }) => (
      <StFileRow key={file.name}>
        <StFileName>
          <FileIcon />
          {file.name}
        </StFileName>
        <StFileDate>{file.date}</StFileDate>
        <StFileType>{file.type}</StFileType>
        <StFileSize>{file.size}</StFileSize>
      </StFileRow>
    ))}
    <StHighlight />
    <StWatermark>
      {'http://blog.csdn.net/yearafteryear'.split('').map((char, index) => (
        <StWatermarkChar key={index}>{char}</StWatermarkChar>
      ))}
    </StWatermark>
  </StFiles>
);

const StartOrb = () => (
  <StStartOrb>
    <svg width="28" height="38" viewBox="0 730 28 38">
      <defs>
        <radialGradient id="orb" cx=".5" cy=".9" r=".9">
          <stop offset="0" stopColor="#2fd0ff" />
          <stop offset=".5" stopColor="#1673b8" />
          <stop offset="1" stopColor="#8fb4cb" />
        </radialGradient>
      </defs>
      <path d="M0 738h28v30H0Z" fill="#57534f" />
      <path d="M0 738.500h28" stroke="#2e2c2a" />
      <circle cx="21.500" cy="751" r="17.500" fill="url(#orb)" stroke="#27506e" />
      <path d="M25 730h3v7h-3Z" fill="#b0b0b0" />
      <path d="M14 742q5-4 10-1l-2 8q-5-3-10 0Z" fill="#ee6a2c" />
      <path d="M25 742q2 1 5 1v8q-4 0-7-1Z" fill="#9acb4a" />
      <path d="M11.500 751q5-3 9.500 0l-2 8q-5-3-10 0Z" fill="#4fa8e8" />
      <path d="M22.500 752q3 2 7 1v8q-5 1-9-1Z" fill="#fdd04a" />
    </svg>
  </StStartOrb>
);

const App: React.FC = () => {
  return (
    <>
      <GlobalStyle />
      <StScreen>
        <EclipseStrip />
        <StMain>
          <StBrowserMenu>
            <StGrip $gap={12} $height={20} />
            <StMenuItem $width={54}>文件(F)</StMenuItem>
            <StMenuItem $width={55}>编辑(E)</StMenuItem>
            <StMenuItem $width={56}>查看(V)</StMenuItem>
            <StMenuItem $width={68}>收藏夹(A)</StMenuItem>
            <StMenuItem $width={55}>工具(T)</StMenuItem>
            <StMenuItem $width={55}>帮助(H)</StMenuItem>
          </StBrowserMenu>
          <BrowserPage />
          <StWindowRow>
            <StGutter />
            <StWindow>
              <Glass />
              <StMenuBar>
                <StGrip $gap={13} $height={22} />
                <StMenuItem $width={54}>文件(F)</StMenuItem>
                <StMenuItem $width={55}>编辑(E)</StMenuItem>
                <StMenuItem $width={56}>查看(V)</StMenuItem>
                <StMenuItem $width={55}>工具(T)</StMenuItem>
                <StMenuItem $width={55}>帮助(H)</StMenuItem>
              </StMenuBar>
              <Toolbar />
              <StContent>
                <Tree />
                <FileList />
              </StContent>
            </StWindow>
          </StWindowRow>
        </StMain>
        <StartOrb />
      </StScreen>
    </>
  );
};

export default App;
